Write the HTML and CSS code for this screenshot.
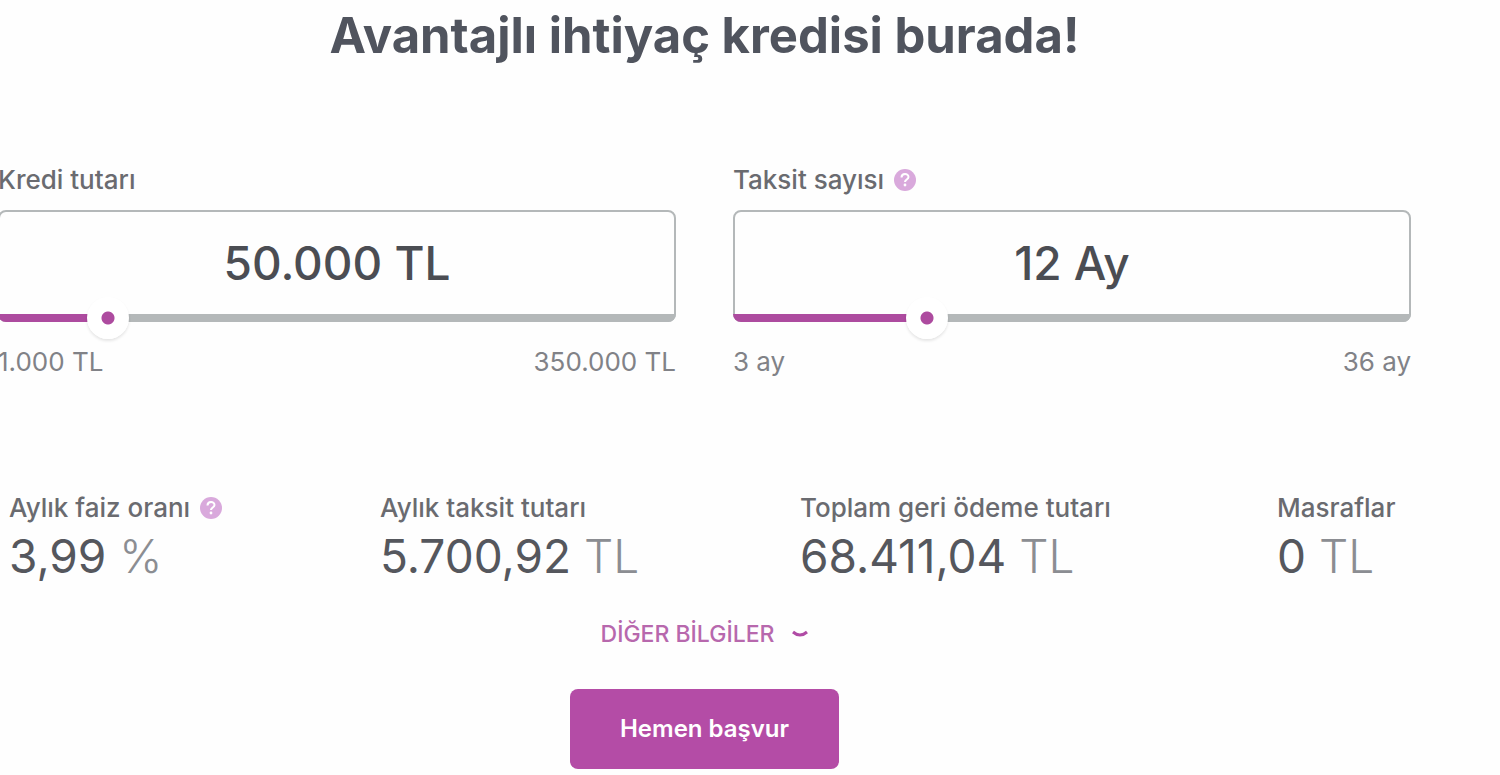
FILE: index.html
```html
<!DOCTYPE html>
<html lang="tr">
<head>
    <meta charset="UTF-8">
    <meta name="viewport" content="width=device-width, initial-scale=1.0">
    <title>İhtiyaç Kredisi</title>
    <link rel="stylesheet" href="styles.css">
</head>
<body>
    <main class="calculator">
        <h1>Avantajlı ihtiyaç kredisi burada!</h1>

        <div class="fields">
            <div class="field">
                <div class="field-label">
                    <label for="amount">Kredi tutarı</label>
                </div>
                <div class="field-box">
                    <input class="field-value" type="text" id="amount" value="50.000 TL">
                    <input class="slider" type="range" aria-label="Kredi tutarı" min="1000" max="350000" step="1000" value="50000" style="--fill: 14%">
                </div>
                <div class="limits">
                    <span>1.000 TL</span>
                    <span>350.000 TL</span>
                </div>
            </div>

            <div class="field">
                <div class="field-label">
                    <label for="term">Taksit sayısı</label>
                    <button class="help" type="button" aria-label="Bilgi">
                        <svg viewBox="0 0 22 22" width="22" height="22">
                            <circle cx="11" cy="11" r="11" fill="#d9a9dc"/>
                            <path d="M7.5 8.5c0-4.500 7-4.500 7-.5 0 2.500-3.500 2.500-3.500 5" fill="none" stroke="#fff" stroke-width="2"/>
                            <circle cx="11" cy="16" r="1.400" fill="#fff"/>
                        </svg>
                    </button>
                </div>
                <div class="field-box">
                    <input class="field-value" type="text" id="term" value="12 Ay">
                    <input class="slider" type="range" aria-label="Taksit sayısı" min="3" max="36" value="12" style="--fill: 27%">
                </div>
                <div class="limits">
                    <span>3 ay</span>
                    <span>36 ay</span>
                </div>
            </div>
        </div>

        <dl class="summary">
            <div>
                <dt>
                    Aylık faiz oranı
                    <button class="help" type="button" aria-label="Bilgi">
                        <svg viewBox="0 0 22 22" width="22" height="22">
                            <circle cx="11" cy="11" r="11" fill="#d9a9dc"/>
                            <path d="M7.5 8.5c0-4.500 7-4.500 7-.5 0 2.500-3.500 2.500-3.500 5" fill="none" stroke="#fff" stroke-width="2"/>
                            <circle cx="11" cy="16" r="1.400" fill="#fff"/>
                        </svg>
                    </button>
                </dt>
                <dd>3,99 <span class="unit">%</span></dd>
            </div>
            <div>
                <dt>Aylık taksit tutarı</dt>
                <dd>5.700,92 <span class="unit">TL</span></dd>
            </div>
            <div>
                <dt>Toplam geri ödeme tutarı</dt>
                <dd>68.411,04 <span class="unit">TL</span></dd>
            </div>
            <div>
                <dt>Masraflar</dt>
                <dd>0 <span class="unit">TL</span></dd>
            </div>
        </dl>

        <button class="more" type="button">
            DİĞER BİLGİLER
            <svg viewBox="0 0 16 8" width="16" height="8">
                <path d="M1 2Q8 8 15 2" fill="none" stroke="#b04ba5" stroke-width="3"/>
            </svg>
        </button>

        <button class="apply" type="button">Hemen başvur</button>
    </main>
</body>
</html>
```
FILE: styles.css
```css
* {
    margin: 0;
    padding: 0;
    box-sizing: border-box;
}

body {
    background: #fefefe;
    color: #6a6b70;
    font-family: Inter, "Noto Sans", sans-serif;
    font-size: 26px;
    line-height: 32px;
    overflow-x: hidden;
}

button,
input {
    font: inherit;
    border: none;
    background: none;
}

button {
    cursor: pointer;
}

.calculator {
    display: flex;
    flex-direction: column;
    align-items: center;
    margin: 0 89px 0 -2px;
    padding-top: 8px;
}

h1 {
    color: #50545e;
    font-size: 49px;
    line-height: 56px;
    font-weight: 700;
}

.fields {
    display: grid;
    grid-template-columns: 1fr 1fr;
    gap: 57px;
    width: 100%;
    margin-top: 100px;
}

.field-label,
dt {
    display: flex;
    align-items: center;
    gap: 10px;
    font-weight: 500;
}

.help {
    display: flex;
}

.field-box {
    position: relative;
    height: 112px;
    margin-top: 14px;
    border: 2px solid #b4b8b9;
    border-bottom-width: 8px;
    border-radius: 8px;
}

.field-value {
    width: 100%;
    height: 100%;
    color: #4b4d53;
    font-size: 46px;
    font-weight: 500;
    text-align: center;
    outline: none;
}

/* slider sits on the bottom border of the box */
.slider {
    position: absolute;
    left: -2px;
    bottom: -25px;
    width: calc(100% + 4px);
    height: 42px;
    appearance: none;
    outline: none;
}

.slider::-webkit-slider-runnable-track {
    height: 8px;
    border-radius: 0 0 8px 8px;
    background: linear-gradient(to right, #ad4b9f var(--fill), #b4b8b9 var(--fill));
}

.slider::-webkit-slider-thumb {
    appearance: none;
    width: 42px;
    height: 42px;
    margin-top: -17px;
    border-radius: 50%;
    background: radial-gradient(circle, #ad4b9f 6px, #fff 7px);
    box-shadow: 0 2px 3px rgba(0, 0, 0, 0.1);
}

.limits {
    display: flex;
    justify-content: space-between;
    margin-top: 24px;
    color: #818287;
}

.summary {
    display: grid;
    grid-template-columns: 371fr 420fr 477fr 134fr;
    width: 100%;
    margin-top: 114px;
    padding-left: 11px;
}

dt {
    white-space: nowrap;
}

dd {
    color: #55575d;
    font-size: 46px;
    line-height: 64px;
    white-space: nowrap;
}

.unit {
    color: #8b8d92;
    font-weight: 300;
}

.more {
    display: flex;
    align-items: center;
    gap: 18px;
    margin-top: 30px;
    color: #b768ad;
    font-size: 23px;
    font-weight: 500;
}

.apply {
    margin-top: 39px;
    padding: 24px 50px;
    border-radius: 8px;
    background: #b44ca6;
    color: #fff;
    font-size: 24px;
    font-weight: 600;
}
```
